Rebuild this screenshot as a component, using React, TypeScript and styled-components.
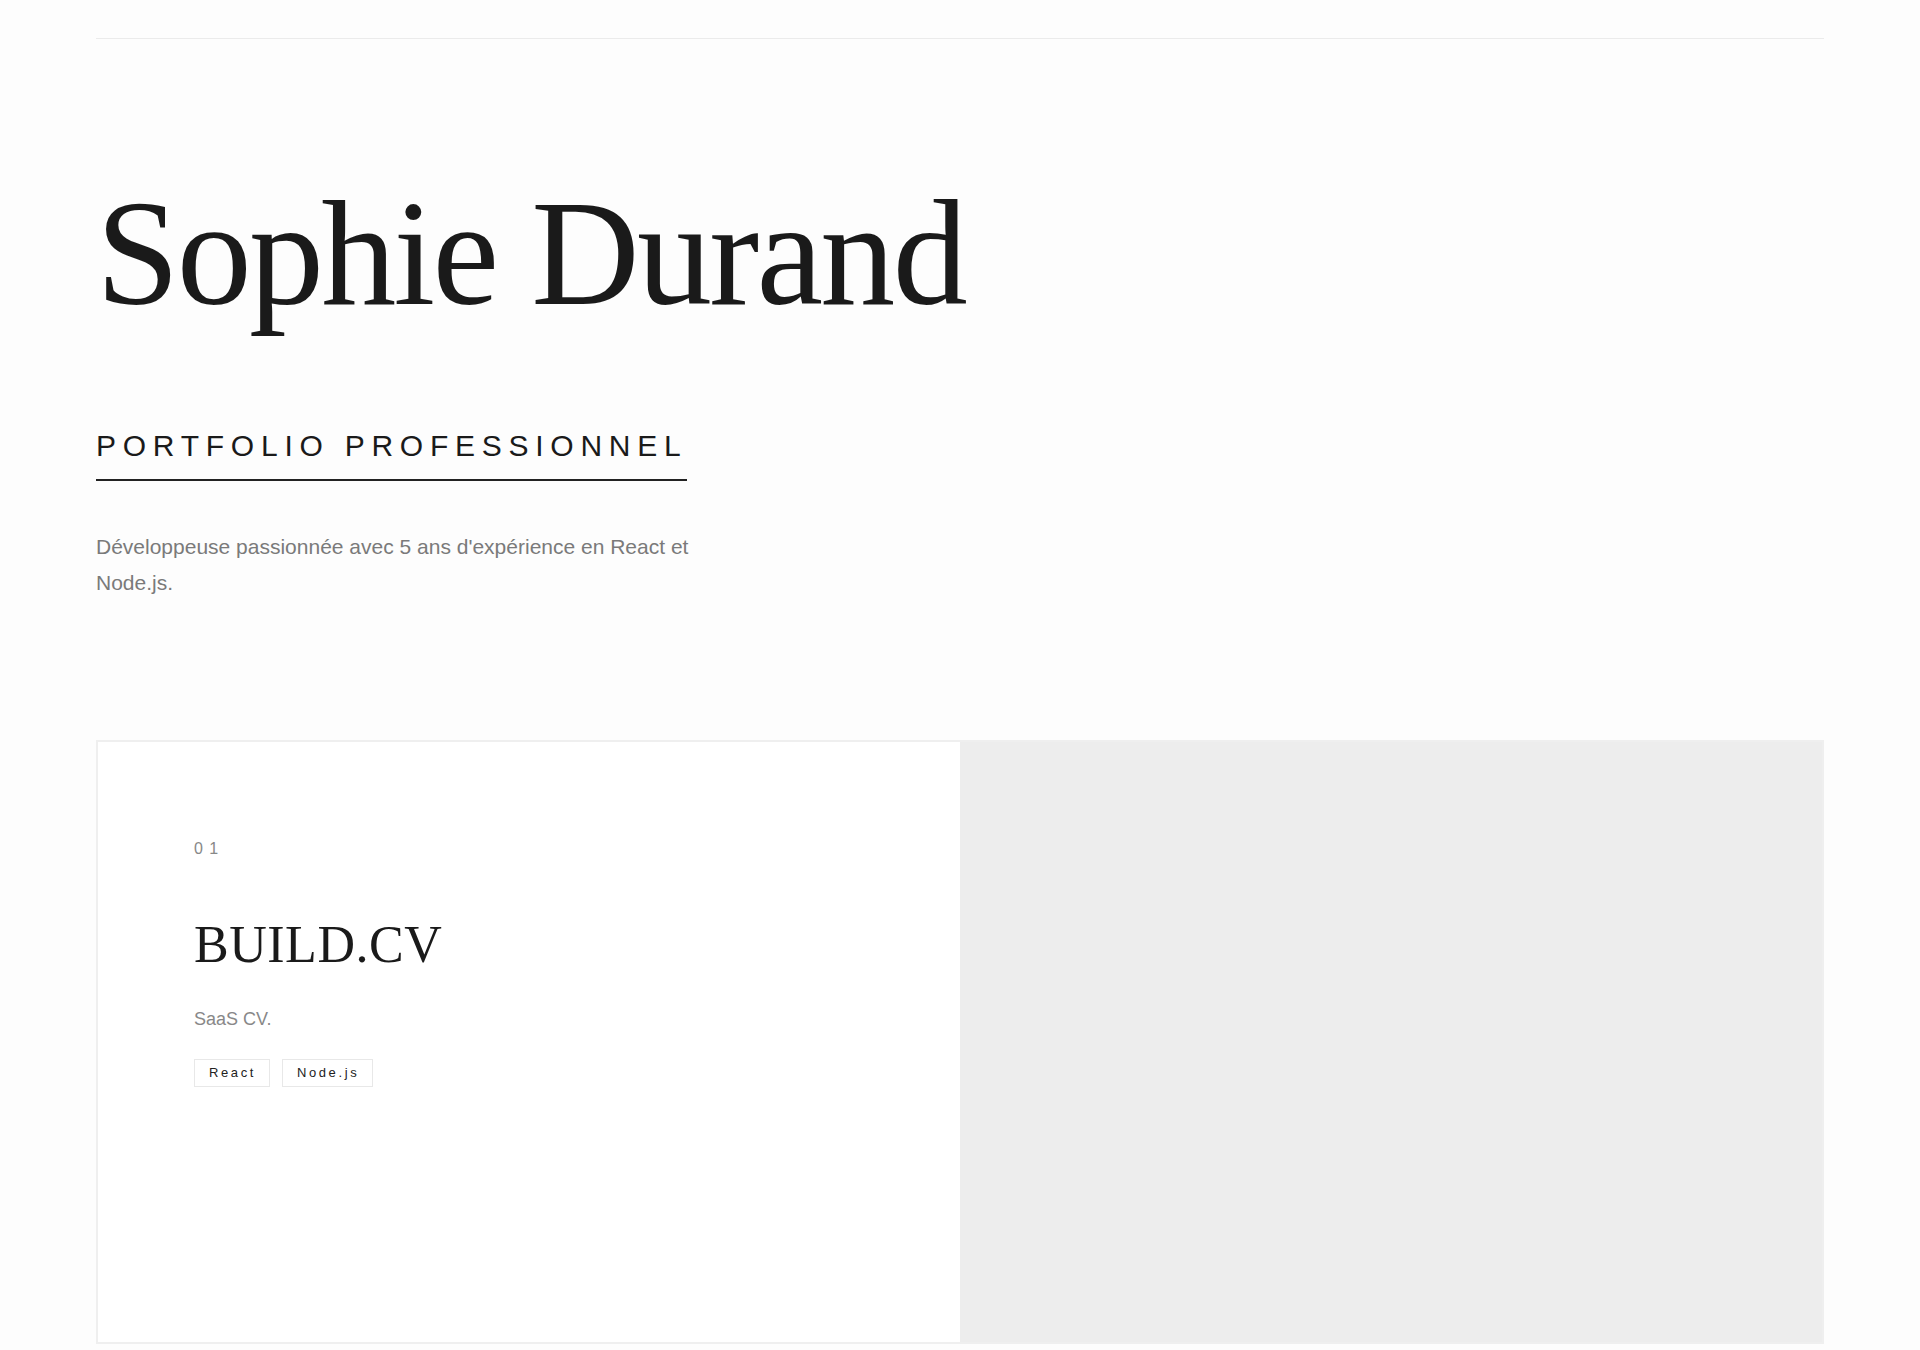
import React from "react";
import styled, { createGlobalStyle } from "styled-components";

const GlobalStyle = createGlobalStyle`
  html, body {
    margin: 0;
    padding: 0;
    background: #fdfdfd;
  }
  * { box-sizing: border-box; }
`;

const Page = styled.div`
  padding: 0 96px;
  font-family: "Liberation Sans", Arial, sans-serif;
  color: #1a1a1a;
`;

const Header = styled.header`
  height: 39px;
  border-bottom: 1px solid #ebebeb;
`;

const Hero = styled.section`
  padding-top: 139px;
  display: flex;
  flex-direction: column;
  align-items: flex-start;
`;

const Name = styled.h1`
  margin: 0;
  font-family: "Liberation Serif", "Times New Roman", serif;
  font-weight: 400;
  font-size: 150px;
  line-height: 1;
  letter-spacing: -0.018em;
  color: #1a1a1a;
`;

const Subtitle = styled.h2`
  margin: 101px 0 0;
  font-family: "Liberation Sans", Arial, sans-serif;
  font-weight: 400;
  font-size: 30px;
  line-height: 1.15;
  letter-spacing: 0.225em;
  text-transform: uppercase;
  padding-bottom: 15px;
  border-bottom: 2px solid #222;
  color: #1a1a1a;
`;

const Intro = styled.p`
  margin: 48px 0 0;
  max-width: 620px;
  font-size: 21px;
  line-height: 36.5px;
  color: #7a7a7a;
`;

const Card = styled.article`
  margin-top: 138px;
  display: grid;
  grid-template-columns: 1fr 1fr;
  min-height: 604px;
  border: 2px solid #efefef;
`;

const CardBody = styled.div`
  background: #fff;
  padding: 96px;
  display: flex;
  flex-direction: column;
  align-items: flex-start;
`;

const Visual = styled.div`
  background: #ededed;
`;

const Index = styled.span`
  font-size: 16px;
  line-height: 21px;
  letter-spacing: 0.4em;
  color: #888;
`;

const ProjectTitle = styled.h3`
  margin: 57px 0 0;
  font-family: "Liberation Serif", "Times New Roman", serif;
  font-weight: 400;
  font-size: 52px;
  line-height: 1.1;
  letter-spacing: 0.01em;
  color: #1a1a1a;
`;

const ProjectDesc = styled.p`
  margin: 32px 0 0;
  font-size: 18px;
  line-height: 1.6;
  color: #888;
`;

const Tags = styled.div`
  margin-top: 26px;
  display: flex;
  gap: 12px;
`;

const Tag = styled.span`
  display: inline-block;
  padding: 5px 13px 5px 14px;
  border: 1px solid #e8e8e8;
  font-size: 13px;
  line-height: 1.2;
  letter-spacing: 0.2em;
  color: #222;
`;

export default function App() {
  return (
    <>
      <GlobalStyle />
      <Page>
        <Header />
        <Hero>
          <Name>Sophie Durand</Name>
          <Subtitle>Portfolio Professionnel</Subtitle>
          <Intro>
            Développeuse passionnée avec 5 ans d'expérience en React et Node.js.
          </Intro>
        </Hero>
        <Card>
          <CardBody>
            <Index>01</Index>
            <ProjectTitle>BUILD.CV</ProjectTitle>
            <ProjectDesc>SaaS CV.</ProjectDesc>
            <Tags>
              <Tag>React</Tag>
              <Tag>Node.js</Tag>
            </Tags>
          </CardBody>
          <Visual />
        </Card>
      </Page>
    </>
  );
}
